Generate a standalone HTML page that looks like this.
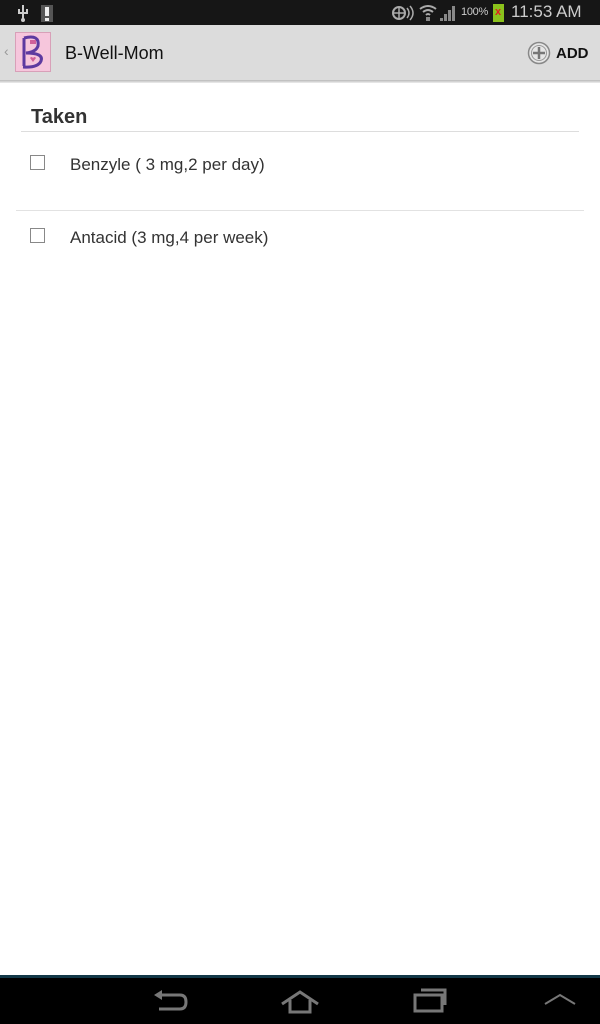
<!DOCTYPE html>
<html><head><meta charset="utf-8"><style>
*{margin:0;padding:0;box-sizing:border-box}
body{width:600px;height:1024px;background:#fff;font-family:"Liberation Sans",sans-serif;position:relative;overflow:hidden}
.abs{position:absolute}
</style></head><body>
<div class="abs" style="left:0;top:0;width:600px;height:25px;background:#161616"></div>
<svg class="abs" style="left:14px;top:3px" width="40" height="20">
<path d="M9 2v16M5 6v4h8V6M9 14" stroke="#ccc" stroke-width="2" fill="none"/><circle cx="9" cy="17" r="2" fill="#ccc"/>
<rect x="27" y="2" width="12" height="17" fill="#555"/><rect x="31" y="4" width="4" height="9" fill="#eee"/><rect x="31" y="15" width="4" height="3" fill="#eee"/>
</svg>
<svg class="abs" style="left:390px;top:3px" width="100" height="20">
<circle cx="9" cy="10" r="6" stroke="#aaa" stroke-width="2" fill="none"/><path d="M3 10h12M9 4v12" stroke="#aaa" stroke-width="1.5"/>
<path d="M17 5q4 5 0 10M20 3q6 7 0 14" stroke="#aaa" stroke-width="1.5" fill="none"/>
<path d="M30 6q8-6 16 0M33 9q5-4 10 0M36 12q2-2 4 0" stroke="#aaa" stroke-width="2" fill="none"/><path d="M36 14h4v4h-4z" fill="#888"/>
<path d="M50 18h3v-3h-3zM54 18h3v-7h-3zM58 18h3v-11h-3zM62 18h3v-15h-3z" fill="#888"/>
</svg>
<div class="abs" style="left:461px;top:6px;font-size:11px;color:#ccc;letter-spacing:-0.3px">100%</div>
<div class="abs" style="left:493px;top:4px;width:11px;height:18px;background:#8bc21c"></div>
<div class="abs" style="left:495px;top:6px;font-size:11px;color:#d22;font-weight:bold">x</div>
<div class="abs" style="left:511px;top:2px;font-size:17px;color:#ccc">11:53 AM</div>
<div class="abs" style="left:0;top:25px;width:600px;height:55px;background:#dcdcdc"></div>
<div class="abs" style="left:0;top:80px;width:600px;height:3px;background:linear-gradient(#b8b8b8,#eee)"></div>
<div class="abs" style="left:4px;top:43px;font-size:14px;color:#999">‹</div>
<div class="abs" style="left:15px;top:32px;width:36px;height:40px;background:#f6c6dc;border:1px solid #d8a0b8"></div>
<svg class="abs" style="left:15px;top:32px" width="36" height="40">
<path d="M9 6v28M9 6q16-4 14 8q-2 6-12 7q18 0 15 8q-3 7-18 6" stroke="#5d3aa0" stroke-width="3" fill="none"/>
<path d="M15 26l3 4 3-4q-1.5-2-3 0q-1.5-2-3 0z" fill="#d0609a"/><rect x="15" y="8" width="6" height="4" fill="#d0609a"/>
</svg>
<div class="abs" style="left:65px;top:43px;font-size:18px;color:#111">B-Well-Mom</div>
<svg class="abs" style="left:527px;top:41px" width="24" height="24"><circle cx="12" cy="12" r="10.5" stroke="#888" stroke-width="1.5" fill="#e6e6e6"/><circle cx="12" cy="12" r="7.5" stroke="#999" fill="none"/><path d="M12 6v12M6 12h12" stroke="#777" stroke-width="2.5"/></svg>
<div class="abs" style="left:556px;top:45px;font-size:15px;font-weight:bold;color:#111">ADD</div>
<div class="abs" style="left:31px;top:106px;font-size:20px;font-weight:bold;color:#333">Taken</div>
<div class="abs" style="left:21px;top:131px;width:558px;height:1px;background:#ddd"></div>
<div class="abs" style="left:30px;top:155px;width:15px;height:15px;border:1px solid #888"></div>
<div class="abs" style="left:70px;top:155px;font-size:17px;color:#333">Benzyle ( 3 mg,2 per day)</div>
<div class="abs" style="left:16px;top:210px;width:568px;height:1px;background:#e2e2e2"></div>
<div class="abs" style="left:30px;top:228px;width:15px;height:15px;border:1px solid #888"></div>
<div class="abs" style="left:70px;top:228px;font-size:17px;color:#333">Antacid (3 mg,4 per week)</div>
<div class="abs" style="left:0;top:975px;width:600px;height:3px;background:#123848"></div>
<div class="abs" style="left:0;top:978px;width:600px;height:46px;background:#000"></div>
<svg class="abs" style="left:0;top:978px" width="600" height="46">
<path d="M160 17h20q6 0 6 7t-6 7h-21" stroke="#777" stroke-width="3" fill="none"/><path d="M154 17l8-5v10z" fill="#777"/>
<path d="M282 26l18-12 18 12" stroke="#777" stroke-width="3" fill="none"/><path d="M290 22v12h20v-12" stroke="#777" stroke-width="3" fill="none"/>
<rect x="415" y="17" width="27" height="16" stroke="#777" stroke-width="3" fill="none"/><path d="M421 12h24v15" stroke="#777" stroke-width="3" fill="none"/>
<path d="M545 26l15-9 15 9" stroke="#777" stroke-width="2" fill="none"/>
</svg>
</body></html>
